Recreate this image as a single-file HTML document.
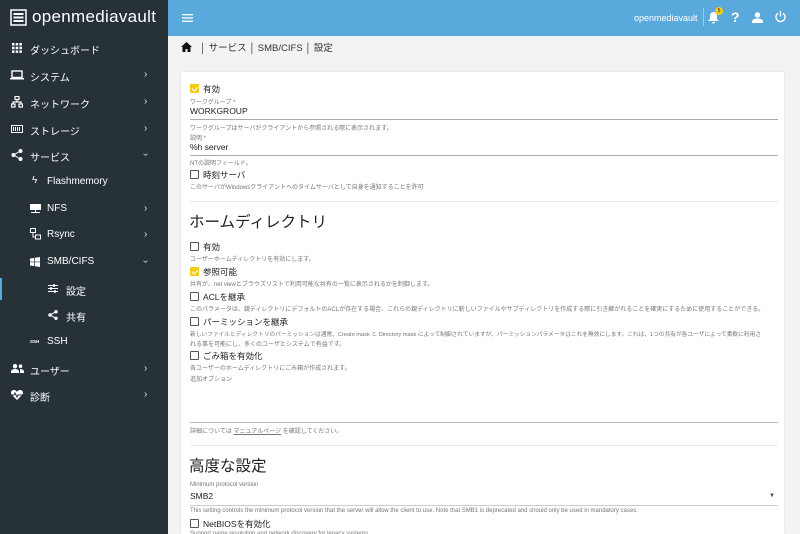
<!DOCTYPE html>
<html><head><meta charset="utf-8"><style>
*{margin:0;padding:0;box-sizing:border-box}
html,body{width:800px;height:534px;overflow:hidden}
body{font-family:"Liberation Sans","Noto Sans CJK JP",sans-serif;background:#f3f3f3;position:relative;color:#333}
.sb{position:absolute;left:0;top:0;width:168px;height:534px;background:#263238;color:#fff}
.top{position:absolute;left:168px;top:0;width:632px;height:36px;background:#5aa9dc}
.a{position:absolute;white-space:nowrap}
.it{position:absolute;font-size:10px;color:#fff;white-space:nowrap}
.chev{position:absolute;left:144px;font-size:10px;color:#dfe3e5}
.card{position:absolute;left:181px;top:72px;width:603px;height:462px;background:#fff;box-shadow:0 0 2px rgba(0,0,0,.1)}
.cb{position:absolute;left:190px;width:9px;height:9px;border:1.3px solid #555;border-radius:1px}
.cb.on{background:#f6c915;border-color:#f6c915}
.cb.on::after{content:"";position:absolute;left:2px;top:0;width:2.5px;height:5px;border:solid #fff;border-width:0 1px 1px 0;transform:rotate(45deg)}
.lb{position:absolute;left:203px;font-size:8.5px;color:#222;white-space:nowrap}
.h{position:absolute;left:190px;font-size:6px;color:#777;white-space:nowrap}
.v{position:absolute;left:190px;font-size:8.5px;color:#222}
.ln{position:absolute;left:190px;width:588px;height:1px;background:#aaa}
.dv{position:absolute;left:190px;width:588px;height:1px;background:#e6e6e6}
</style></head><body>
<div class="sb">
 <svg class="a" style="left:10px;top:9px" width="17" height="17" viewBox="0 0 17 17"><rect x="1" y="1" width="15" height="15" fill="none" stroke="#fff" stroke-width="1.5"/><rect x="3.5" y="4" width="10" height="2" fill="#fff"/><rect x="3.5" y="7.5" width="10" height="2" fill="#fff"/><rect x="3.5" y="11" width="10" height="2" fill="#fff"/></svg>
 <div class="a" style="left:32px;top:7px;font-size:17px;color:#fff;letter-spacing:.3px">openmediavault</div>
 <svg class="a" style="left:12px;top:43px" width="10" height="10"><g fill="#fff"><rect x="0" y="0" width="2.5" height="2.5"/><rect x="3.7" y="0" width="2.5" height="2.5"/><rect x="7.4" y="0" width="2.5" height="2.5"/><rect x="0" y="3.7" width="2.5" height="2.5"/><rect x="3.7" y="3.7" width="2.5" height="2.5"/><rect x="7.4" y="3.7" width="2.5" height="2.5"/><rect x="0" y="7.4" width="2.5" height="2.5"/><rect x="3.7" y="7.4" width="2.5" height="2.5"/><rect x="7.4" y="7.4" width="2.5" height="2.5"/></g></svg>
 <div class="it" style="left:30px;top:42px">ダッシュボード</div>
 <svg class="a" style="left:10px;top:70px" width="14" height="10"><rect x="2" y="1" width="10" height="6.5" fill="none" stroke="#fff" stroke-width="1.4"/><rect x="0" y="8" width="14" height="1.5" fill="#fff"/></svg>
 <div class="it" style="left:30px;top:69px">システム</div><div class="chev" style="top:69px">›</div>
 <svg class="a" style="left:11px;top:96px" width="12" height="12" fill="none" stroke="#fff" stroke-width="1.2"><rect x="4" y="0.5" width="4" height="3"/><rect x="0.5" y="8" width="3.5" height="3"/><rect x="8" y="8" width="3.5" height="3"/><path d="M6 3.5V6M2 8V6h8v2"/></svg>
 <div class="it" style="left:30px;top:96px">ネットワーク</div><div class="chev" style="top:96px">›</div>
 <svg class="a" style="left:11px;top:125px" width="12" height="8"><rect x="0.5" y="0.5" width="11" height="7" fill="none" stroke="#fff"/><g fill="#fff"><rect x="2" y="2" width="1" height="4"/><rect x="4" y="2" width="1" height="4"/><rect x="6" y="2" width="1" height="4"/><rect x="8" y="2" width="1" height="4"/></g></svg>
 <div class="it" style="left:30px;top:123px">ストレージ</div><div class="chev" style="top:123px">›</div>
 <svg class="a" style="left:11px;top:149px" width="12" height="12" fill="#fff"><circle cx="9.5" cy="2" r="2"/><circle cx="2.5" cy="6" r="2"/><circle cx="9.5" cy="10" r="2"/><path d="M9.5 2L2.5 6L9.5 10" stroke="#fff" fill="none" stroke-width="1"/></svg>
 <div class="it" style="left:30px;top:149px">サービス</div><div class="chev" style="top:149px;transform:rotate(90deg)">›</div>
 <div class="it" style="left:32px;top:175px;font-size:10px">ϟ</div>
 <div class="it" style="left:47px;top:176px">Flashmemory</div>
 <svg class="a" style="left:30px;top:204px" width="11" height="10" fill="#fff"><rect x="0" y="0" width="11" height="6"/><rect x="5" y="6" width="1" height="2"/><rect x="1" y="8" width="9" height="1"/></svg>
 <div class="it" style="left:47px;top:203px">NFS</div><div class="chev" style="top:203px">›</div>
 <svg class="a" style="left:30px;top:228px" width="11" height="12" fill="none" stroke="#fff"><rect x="0.5" y="0.5" width="5" height="4"/><rect x="5.5" y="7" width="5" height="4"/><path d="M3 4.5V9h2.5"/></svg>
 <div class="it" style="left:47px;top:229px">Rsync</div><div class="chev" style="top:229px">›</div>
 <svg class="a" style="left:30px;top:257px" width="10" height="10" fill="#fff"><path d="M0 1.5L4 1v3.6H0zM4.7 .9L10 0v4.6H4.7zM0 5.3h4v3.7L0 8.5zM4.7 5.3H10V10L4.7 9.1z"/></svg>
 <div class="it" style="left:47px;top:256px">SMB/CIFS</div><div class="chev" style="top:256px;transform:rotate(90deg)">›</div>
 <div class="a" style="left:0;top:278px;width:2px;height:22px;background:#5aa9dc"></div>
 <svg class="a" style="left:48px;top:284px" width="10" height="9" stroke="#fff" stroke-width="1"><path d="M0 1.5h10M0 4.5h10M0 7.5h10"/><path d="M6 0v3M3 3v3M7 6v3" stroke-width="1.5"/></svg>
 <div class="it" style="left:66px;top:283px">設定</div>
 <svg class="a" style="left:48px;top:310px" width="10" height="10" fill="#fff"><circle cx="8" cy="1.7" r="1.7"/><circle cx="2" cy="5" r="1.7"/><circle cx="8" cy="8.3" r="1.7"/><path d="M8 1.7L2 5L8 8.3" stroke="#fff" fill="none"/></svg>
 <div class="it" style="left:66px;top:309px">共有</div>
 <div class="it" style="left:30px;top:339px;font-size:4.5px;font-weight:bold">SSH</div>
 <div class="it" style="left:47px;top:336px">SSH</div>
 <svg class="a" style="left:11px;top:364px" width="13" height="9" fill="#fff"><circle cx="4" cy="2.2" r="2.2"/><circle cx="9.5" cy="2.2" r="1.8"/><path d="M0 9V7.5C0 6 2 5 4 5s4 1 4 2.5V9zM9 5c2 0 4 1 4 2.5V9H9z"/></svg>
 <div class="it" style="left:30px;top:363px">ユーザー</div><div class="chev" style="top:363px">›</div>
 <svg class="a" style="left:11px;top:390px" width="12" height="10" fill="#fff"><path d="M6 10L1 5C-1 3 0 0 3 0c1.5 0 2.5 1 3 2 .5-1 1.5-2 3-2 3 0 4 3 2 5z"/><path d="M0 5h3l1-2 2 4 1-2h5" stroke="#263238" fill="none" stroke-width="1"/></svg>
 <div class="it" style="left:30px;top:389px">診断</div><div class="chev" style="top:389px">›</div>
</div>
<div class="top">
 <svg class="a" style="left:14px;top:14px" width="11" height="8" fill="#fff"><rect y="0" width="11" height="1.3"/><rect y="3.3" width="11" height="1.3"/><rect y="6.6" width="11" height="1.3"/></svg>
 <div class="a" style="left:466px;top:13px;font-size:9px;color:#fff">openmediavault</div>
 <div class="a" style="left:535px;top:8px;width:1px;height:18px;background:rgba(255,255,255,.4)"></div>
 <svg class="a" style="left:540px;top:12px" width="11" height="12" fill="#fff"><path d="M5.5 0C3 0 2 2 2 4v3L0 9h11L9 7V4C9 2 8 0 5.5 0zM4 10h3a1.5 1.5 0 0 1-3 0z"/></svg>
 <div class="a" style="left:547px;top:7px;width:8px;height:8px;border-radius:50%;background:#f6c915;font-size:5px;text-align:center;line-height:8px;color:#333">5</div>
 <div class="a" style="left:563px;top:9px;font-size:14px;color:#fff;font-weight:bold">?</div>
 <svg class="a" style="left:584px;top:12px" width="11" height="11" fill="#fff"><circle cx="5.5" cy="3" r="2.7"/><path d="M0 11V9.5C0 7.5 3 6.5 5.5 6.5S11 7.5 11 9.5V11z"/></svg>
 <svg class="a" style="left:607px;top:11px" width="11" height="12" fill="none" stroke="#fff" stroke-width="1.4"><path d="M5.5 0v5.5"/><path d="M3 2.3A4.5 4.5 0 1 0 8 2.3"/></svg>
</div>
<svg class="a" style="left:181px;top:42px" width="11" height="10" fill="#111"><path d="M5.5 0L0 5h1.5v5h3V7h2v3h3V5H11z"/></svg>
<div class="a" style="left:200px;top:40px;font-size:9.5px;color:#333">│ サービス │ SMB/CIFS │ 設定</div>
<div class="card"></div>
<div class="cb on" style="top:84px"></div><div class="lb" style="top:83px">有効</div>
<div class="h" style="top:97px">ワークグループ *</div>
<div class="v" style="top:106px">WORKGROUP</div><div class="ln" style="top:119px"></div>
<div class="h" style="top:123px">ワークグループはサーバがクライアントから参照される際に表示されます。</div>
<div class="h" style="top:133px">説明 *</div>
<div class="v" style="top:142px">%h server</div><div class="ln" style="top:155px"></div>
<div class="h" style="top:158px">NTの説明フィールド。</div>
<div class="cb" style="top:170px"></div><div class="lb" style="top:169px">時刻サーバ</div>
<div class="h" style="top:182px">このサーバがWindowsクライアントへのタイムサーバとして自身を通知することを許可</div>
<div class="dv" style="top:201px"></div>
<div class="a" style="left:189px;top:210px;font-size:15.5px;color:#222">ホームディレクトリ</div>
<div class="cb" style="top:242px"></div><div class="lb" style="top:241px">有効</div>
<div class="h" style="top:254px">ユーザーホームディレクトリを有効にします。</div>
<div class="cb on" style="top:267px"></div><div class="lb" style="top:266px">参照可能</div>
<div class="h" style="top:279px">共有が、net viewとブラウズリストで利用可能な共有の一覧に表示されるかを制御します。</div>
<div class="cb" style="top:292px"></div><div class="lb" style="top:291px">ACLを継承</div>
<div class="h" style="top:304px">このパラメータは、親ディレクトリにデフォルトのACLが存在する場合、これらの親ディレクトリに新しいファイルやサブディレクトリを作成する際に引き継がれることを確実にするために使用することができる。</div>
<div class="cb" style="top:317px"></div><div class="lb" style="top:316px">パーミッションを継承</div>
<div class="h" style="top:329px;font-size:5.75px;letter-spacing:-.05px">新しいファイルとディレクトリのパーミッションは通常、Create mask と Directory mask によって制御されていますが、パーミッションパラメータはこれを無効にします。これは、1つの共有が各ユーザによって柔軟に利用さ</div>
<div class="h" style="top:339px">れる事を可能にし、多くのユーザとシステムで有益です。</div>
<div class="cb" style="top:351px"></div><div class="lb" style="top:350px">ごみ箱を有効化</div>
<div class="h" style="top:363px">各ユーザーのホームディレクトリにごみ箱が作成されます。</div>
<div class="h" style="top:374px">追加オプション</div>
<div class="ln" style="top:422px;background:#bbb"></div>
<div class="h" style="top:426px">詳細については <u>マニュアルページ</u> を確認してください。</div>
<div class="dv" style="top:445px"></div>
<div class="a" style="left:189px;top:454px;font-size:15.5px;color:#222">高度な設定</div>
<div class="h" style="top:482px">Minimum protocol version</div>
<div class="v" style="top:491px">SMB2</div>
<div class="a" style="left:769px;top:493px;font-size:6px;color:#444">▼</div>
<div class="ln" style="top:505px;background:#ccc"></div>
<div class="h" style="top:508px">This setting controls the minimum protocol version that the server will allow the client to use. Note that SMB1 is deprecated and should only be used in mandatory cases.</div>
<div class="cb" style="top:519px"></div><div class="lb" style="top:518px">NetBIOSを有効化</div>
<div class="h" style="top:531px">Support name resolution and network discovery for legacy systems.</div>
</body></html>
